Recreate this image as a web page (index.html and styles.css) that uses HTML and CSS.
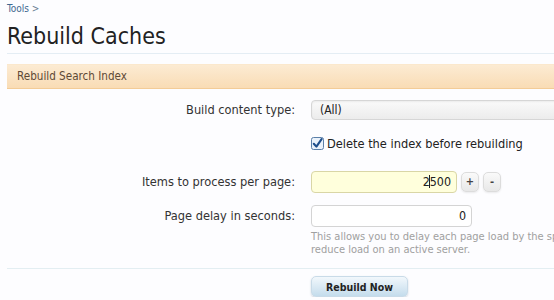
FILE: index.html
```html
<!DOCTYPE html>
<html>
<head>
<meta charset="utf-8">
<link rel="stylesheet" href="styles.css">
</head>
<body>
<div class="page">
  <div class="crumbs"><a class="crumb">Tools</a> &gt;</div>
  <h1 class="title">Rebuild Caches</h1>
  <div class="section-head">Rebuild Search Index</div>
  <div class="form">
    <div class="row row-select">
      <label class="label">Build content type:</label>
      <div class="ctrl"><div class="select">(All)</div></div>
    </div>
    <div class="row row-check">
      <div class="label"></div>
      <div class="ctrl check-line">
        <span class="checkbox"><svg width="13" height="13" viewBox="0 0 13 13"><rect x="0.5" y="0.5" width="12" height="12" rx="2" fill="#eaf2fb" stroke="#5a7fa8"/><path d="M2.8 6.8 L5.4 9.6 L10.6 2.2" fill="none" stroke="#1f4f8c" stroke-width="2.1" stroke-linecap="round" stroke-linejoin="round"/></svg></span>
        <span>Delete the index before rebuilding</span>
      </div>
    </div>
    <div class="row row-items">
      <label class="label">Items to process per page:</label>
      <div class="ctrl spin">
        <div class="input input-items"><span class="val">2<span class="caret"></span>500</span></div>
        <span class="spin-btn">+</span>
        <span class="spin-btn">-</span>
      </div>
    </div>
    <div class="row row-delay">
      <label class="label">Page delay in seconds:</label>
      <div class="ctrl">
        <div class="input input-delay">0</div>
        <p class="hint">This allows you to delay each page load by the specified number of seconds to<br>reduce load on an active server.</p>
      </div>
    </div>
  </div>
  <div class="submit-row">
    <div class="label"></div>
    <div class="ctrl"><span class="button">Rebuild Now</span></div>
  </div>
</div>
</body>
</html>
```
FILE: styles.css
```css
html, body { margin: 0; padding: 0; overflow: hidden; background: #fdfdff; }
body { font-family: "DejaVu Sans Condensed", "DejaVu Sans", sans-serif; color: #333; }
.page { width: 640px; padding: 0 0 0 7px; }
.crumbs { font-size: 10px; color: #6a7f95; padding-top: 2px; height: 13px; line-height: 13px; }
.crumb { color: #3f6890; }
.title { font-size: 23px; font-weight: normal; color: #222; margin: 6px 0 0 0; line-height: 30px; height: 30px; padding-bottom: 2px; border-bottom: 1px solid #e4edf4; }
.section-head { margin-top: 10px; height: 23px; line-height: 23px; padding-left: 10px; font-size: 11.6px; color: #5e4a36; background: linear-gradient(#fcebd3, #f9dcb5); border-bottom: 1px solid #f3cc97; border-top: 1px solid #fbe8cd; }
.form { padding-top: 11px; border-bottom: 1px solid #e3eef2; padding-bottom: 12px; }
.row { display: grid; grid-template-columns: 288px 1fr; column-gap: 16px; align-items: start; }
.label { text-align: right; font-size: 12.7px; color: #333; }
.ctrl { font-size: 12.7px; }
.row-select .label { line-height: 20px; }
.select { height: 18px; line-height: 18px; border: 1px solid #d6d6d6; border-radius: 4px; background: linear-gradient(#fafafa, #ececec); box-shadow: inset 0 1px 2px rgba(0,0,0,0.06); padding-left: 8px; color: #222; font-size: 12px; }
.row-check { margin-top: 16px; }
.check-line { display: flex; align-items: center; gap: 2px; height: 14px; color: #222; }
.checkbox { display: flex; width: 14px; }
.row-items { margin-top: 21px; }
.row-items .label { line-height: 21px; }
.spin { display: flex; align-items: center; gap: 4px; }
.input { box-sizing: border-box; height: 22px; line-height: 20px; border: 1px solid #d4d4d4; border-radius: 4px; text-align: right; padding-right: 5px; color: #222; background: #fff; font-size: 12.4px; }
.input-items { width: 146px; background: #ffffdc; border-color: #d9d6a6; }
.caret { display: inline-block; width: 1px; height: 13px; background: #222; vertical-align: -2px; margin-left: -1px; }
.spin-btn { box-sizing: border-box; width: 18px; height: 20px; line-height: 18px; text-align: center; font-size: 11px; font-weight: bold; border: 1px solid #dcdcdc; border-radius: 5px; background: linear-gradient(#fafafa, #e8e8e8); color: #444; box-shadow: 0 1px 2px rgba(0,0,0,0.08); }
.row-delay { margin-top: 12px; }
.row-delay .label { line-height: 22px; }
.input-delay { width: 161px; }
.hint { margin: 3px 0 0 0; font-size: 11px; line-height: 13px; color: #a0a0a0; white-space: nowrap; }
.submit-row { display: grid; grid-template-columns: 288px 1fr; column-gap: 16px; padding-top: 7px; }
.button { display: inline-block; width: 97px; height: 21px; line-height: 21px; text-align: center; font-size: 10.5px; font-weight: bold; color: #222; border-radius: 5px; background: linear-gradient(#f2f8fc, #c4dcec); border: 1px solid #c9dbe8; box-shadow: 0 1px 2px rgba(60,90,120,0.25); box-sizing: border-box; }
```
